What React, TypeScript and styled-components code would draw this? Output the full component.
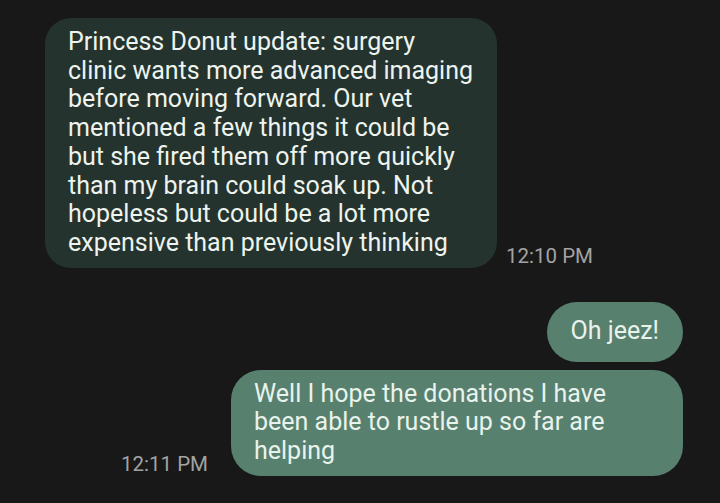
import styled, { createGlobalStyle } from "styled-components";

interface Message {
  id: number;
  text: string;
  time?: string;
  outgoing?: boolean;
  gapAbove: number;
}

const messages: Message[] = [
  {
    id: 1,
    text: "Princess Donut update: surgery clinic wants more advanced imaging before moving forward. Our vet mentioned a few things it could be but she fired them off more quickly than my brain could soak up. Not hopeless but could be a lot more expensive than previously thinking",
    time: "12:10 PM",
    gapAbove: 18,
  },
  { id: 2, text: "Oh jeez!", outgoing: true, gapAbove: 34 },
  {
    id: 3,
    text: "Well I hope the donations I have been able to rustle up so far are helping",
    time: "12:11 PM",
    outgoing: true,
    gapAbove: 8,
  },
];

export default function App() {
  return (
    <>
      <GlobalStyle />
      <Thread>
        {messages.map((m) => (
          <Row key={m.id} $outgoing={m.outgoing} style={{ marginTop: m.gapAbove }}>
            {m.outgoing && m.time && <Stamp $outgoing>{m.time}</Stamp>}
            <Bubble $outgoing={m.outgoing}>{m.text}</Bubble>
            {!m.outgoing && m.time && <Stamp>{m.time}</Stamp>}
          </Row>
        ))}
      </Thread>
    </>
  );
}

const GlobalStyle = createGlobalStyle`
  html, body {
    margin: 0;
    padding: 0;
    background: #181818;
  }
  body {
    font-family: Roboto, "Noto Sans", sans-serif;
  }
`;

const Thread = styled.div`
  width: 720px;
  height: 503px;
  overflow: hidden;
  background: #181818;
  display: flex;
  flex-direction: column;
`;

const Row = styled.div<{ $outgoing?: boolean }>`
  display: flex;
  align-items: flex-end;
  justify-content: ${(p) => (p.$outgoing ? "flex-end" : "flex-start")};
  padding: ${(p) => (p.$outgoing ? "0 37px 0 0" : "0 0 0 45px")};
`;

const Bubble = styled.div<{ $outgoing?: boolean }>`
  box-sizing: border-box;
  width: ${(p) => (p.$outgoing ? "auto" : "452px")};
  max-width: 452px;
  min-height: 60px;
  padding: 10px 24px 10px 23px;
  display: flex;
  align-items: center;
  border-radius: ${(p) => (p.$outgoing ? "30px" : "26px")};
  background: ${(p) => (p.$outgoing ? "#58806f" : "#24332d")};
  color: ${(p) => (p.$outgoing ? "#e8f3ec" : "#eef3ee")};
  font-size: 25px;
  line-height: 28.7px;
`;

const Stamp = styled.span<{ $outgoing?: boolean }>`
  color: #a3a3a3;
  font-size: 20.5px;
  white-space: nowrap;
  margin: ${(p) => (p.$outgoing ? "0 23px 0 0" : "0 0 0 9px")};
`;
